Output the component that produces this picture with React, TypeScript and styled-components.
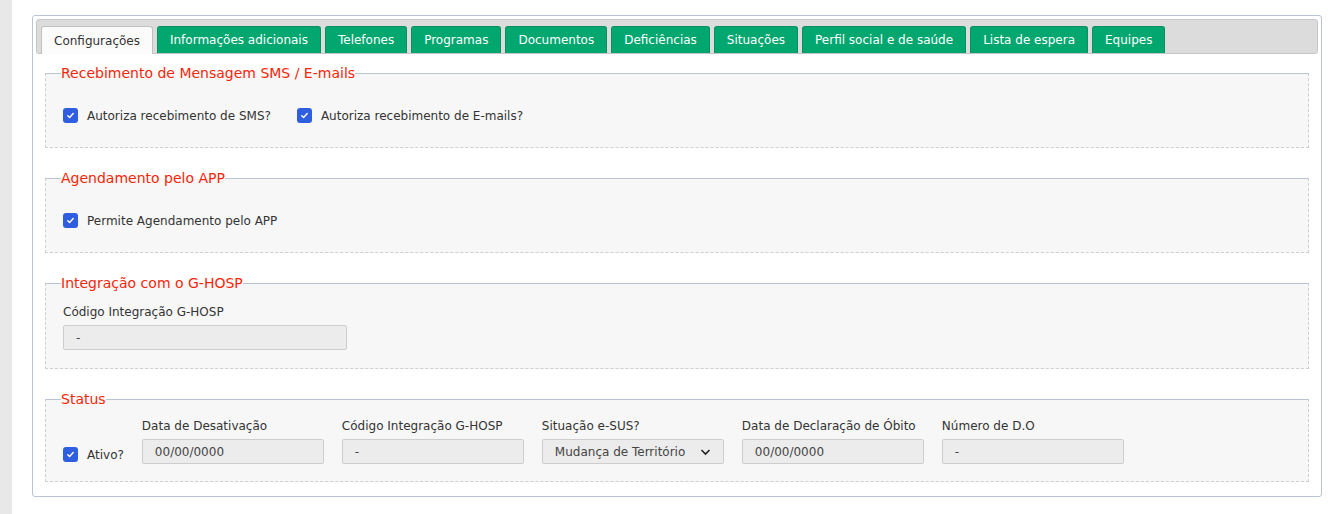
import React from "react";
import styled, { createGlobalStyle } from "styled-components";

const Global = createGlobalStyle`
  body { margin: 0; background: #fff; font-family: "DejaVu Sans", Verdana, sans-serif; }
`;
const Page = styled.div`display: flex; min-height: 514px;`;
const Strip = styled.div`width: 12px; background: #e8e8e8; flex: none;`;
const Main = styled.div`flex: 1; padding: 15px 17px 0 20px;`;
const Panel = styled.div`
  border: 1px solid #b9c5d3; border-radius: 3px; padding: 3px 3px 14px 3px; background: #fff;
`;
const TabBar = styled.div`
  display: flex; gap: 4px; background: #dcdcdc; border: 1px solid #c6c6c6; border-radius: 3px;
  padding: 6px 0 0 4px; height: 27px;
`;
const Tab = styled.div<{ $active?: boolean }>`
  height: 26px; padding: 0 12px; display: flex; align-items: center; font-size: 12px;
  border: 1px solid ${p => (p.$active ? "#c0c0c0" : "#0b8f5e")}; border-bottom: none;
  border-radius: 3px 3px 0 0;
  background: ${p => (p.$active ? "#fbfbfb" : "#02a66f")};
  color: ${p => (p.$active ? "#333" : "#fff")};
  ${p => p.$active && "height: 27px; margin-bottom: -1px;"}
`;
const Body = styled.div`padding: 11px 9px 0 9px; display: flex; flex-direction: column; gap: 22px;`;
const Fieldset = styled.fieldset`
  margin: 0; padding: 0 17px 14px 17px; background: #f7f7f7;
  border: 1px dashed #cfcfcf; border-top: 1px solid #b9c5d3;
`;
const Legend = styled.legend`
  color: #f5260a; font-size: 14px; padding: 0; margin-left: -2px;
`;
const Row = styled.div<{ $top?: number }>`display: flex; align-items: flex-end; gap: 26px; padding-top: ${p => p.$top ?? 0}px;`;
const CheckLabel = styled.label`display: flex; align-items: center; gap: 9px; font-size: 12px; color: #333;`;
const Box = styled.span`
  width: 15px; height: 15px; border-radius: 3px; background: #2f5fe0; display: inline-flex;
  align-items: center; justify-content: center;
`;
const Field = styled.div<{ $w: number }>`display: flex; flex-direction: column; gap: 6px; width: ${p => p.$w}px;`;
const Label = styled.div`font-size: 12px; color: #333;`;
const Input = styled.div`
  height: 23px; border: 1px solid #cdcdcd; border-radius: 2px; background: #ececec;
  font-size: 12px; color: #444; display: flex; align-items: center; padding: 0 12px; justify-content: space-between;
`;

const Check = ({ label }: { label: string }) => (
  <CheckLabel>
    <Box>
      <svg width="9" height="9" viewBox="0 0 10 10"><path d="M2 5.2l2 2 4-4.4" stroke="#fff" strokeWidth="1.6" fill="none" strokeLinecap="round" strokeLinejoin="round" /></svg>
    </Box>
    {label}
  </CheckLabel>
);

const tabs = ["Informações adicionais", "Telefones", "Programas", "Documentos", "Deficiências", "Situações", "Perfil social e de saúde", "Lista de espera", "Equipes"];

export default function App() {
  return (
    <Page>
      <Global />
      <Strip />
      <Main>
        <Panel>
          <TabBar>
            <Tab $active>Configurações</Tab>
            {tabs.map(t => <Tab key={t}>{t}</Tab>)}
          </TabBar>
          <Body>
            <Fieldset>
              <Legend>Recebimento de Mensagem SMS / E-mails</Legend>
              <Row $top={27} style={{ paddingBottom: 10 }}>
                <Check label="Autoriza recebimento de SMS?" />
                <Check label="Autoriza recebimento de E-mails?" />
              </Row>
            </Fieldset>
            <Fieldset>
              <Legend>Agendamento pelo APP</Legend>
              <Row $top={27} style={{ paddingBottom: 10 }}>
                <Check label="Permite Agendamento pelo APP" />
              </Row>
            </Fieldset>
            <Fieldset>
              <Legend>Integração com o G-HOSP</Legend>
              <Row $top={14} style={{ paddingBottom: 4 }}>
                <Field $w={284}><Label>Código Integração G-HOSP</Label><Input>-</Input></Field>
              </Row>
            </Fieldset>
            <Fieldset>
              <Legend>Status</Legend>
              <Row $top={12} style={{ gap: 18, paddingBottom: 3 }}>
                <div style={{ paddingBottom: 2 }}><Check label="Ativo?" /></div>
                <Field $w={182}><Label>Data de Desativação</Label><Input>00/00/0000</Input></Field>
                <Field $w={182}><Label>Código Integração G-HOSP</Label><Input>-</Input></Field>
                <Field $w={182}><Label>Situação e-SUS?</Label><Input>Mudança de Território
                  <svg width="11" height="8" viewBox="0 0 11 8"><path d="M1.5 2l4 4 4-4" stroke="#222" strokeWidth="1.6" fill="none" /></svg></Input></Field>
                <Field $w={182}><Label>Data de Declaração de Óbito</Label><Input>00/00/0000</Input></Field>
                <Field $w={182}><Label>Número de D.O</Label><Input>-</Input></Field>
              </Row>
            </Fieldset>
          </Body>
        </Panel>
      </Main>
    </Page>
  );
}
